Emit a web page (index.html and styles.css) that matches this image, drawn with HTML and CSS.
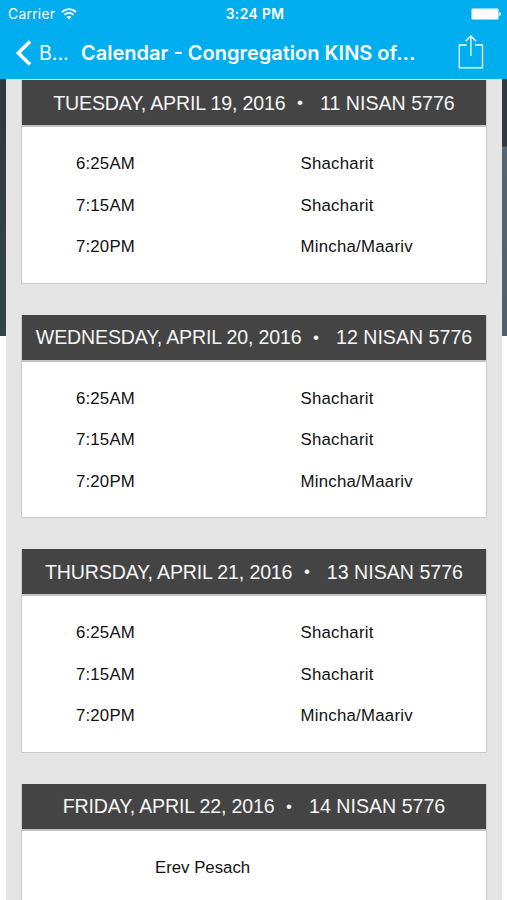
FILE: index.html
```html
<!DOCTYPE html>
<html lang="en">
<head>
<meta charset="utf-8">
<title>Calendar</title>
<link rel="stylesheet" href="styles.css">
</head>
<body>
<header class="topbar">
  <div class="status">
    <div class="carrier"><span>Carrier</span>
      <svg width="16" height="12" viewBox="0 0 16 12" fill="none" stroke="#fff" stroke-width="1.8"><path d="M1 4.2C5 .2 11 .2 15 4.2M3.5 6.8C6 4.3 10 4.3 12.5 6.8"/><path d="M5.6 8.9C7 7.6 9 7.6 10.4 8.9L8 11.3Z" fill="#fff" stroke="none"/></svg>
    </div>
    <div class="clock">3:24 PM</div>
    <svg class="battery" width="31" height="12" viewBox="0 0 31 12" fill="#fff"><rect x="0.5" y="0.5" width="27" height="11" rx="1"/><path d="M28.3 4c2.2.3 2.2 3.7 0 4z"/></svg>
  </div>
  <nav class="nav">
    <svg class="back" width="17" height="26" viewBox="0 0 17 26" fill="none" stroke="#fff" stroke-width="3.6"><path d="M15 1.4L3.4 13L15 24.6"/></svg>
    <span class="back-label">B...</span>
    <h1 class="title">Calendar - Congregation KINS of...</h1>
    <svg class="share" width="26" height="36" viewBox="0 0 26 36" fill="none" stroke="#fff" stroke-width="1.3"><path d="M8.5 11H1.3v22.8h23.2V11h-7.2M12.9 22V2M7.7 7.2L12.9 2l5.2 5.2"/></svg>
  </nav>
</header>
<main class="page">
  <div class="sheet">
    <section class="card">
      <h2 class="day"><span class="date">TUESDAY, APRIL 19, 2016</span><span class="dot">•</span><span>11 NISAN 5776</span></h2>
      <div class="times">
        <div class="row"><span>6:25AM</span><span class="service">Shacharit</span></div>
        <div class="row"><span>7:15AM</span><span class="service">Shacharit</span></div>
        <div class="row"><span>7:20PM</span><span class="service">Mincha/Maariv</span></div>
      </div>
    </section>
    <section class="card">
      <h2 class="day"><span class="date">WEDNESDAY, APRIL 20, 2016</span><span class="dot">•</span><span>12 NISAN 5776</span></h2>
      <div class="times">
        <div class="row"><span>6:25AM</span><span class="service">Shacharit</span></div>
        <div class="row"><span>7:15AM</span><span class="service">Shacharit</span></div>
        <div class="row"><span>7:20PM</span><span class="service">Mincha/Maariv</span></div>
      </div>
    </section>
    <section class="card">
      <h2 class="day"><span class="date">THURSDAY, APRIL 21, 2016</span><span class="dot">•</span><span>13 NISAN 5776</span></h2>
      <div class="times">
        <div class="row"><span>6:25AM</span><span class="service">Shacharit</span></div>
        <div class="row"><span>7:15AM</span><span class="service">Shacharit</span></div>
        <div class="row"><span>7:20PM</span><span class="service">Mincha/Maariv</span></div>
      </div>
    </section>
    <section class="card">
      <h2 class="day"><span class="date">FRIDAY, APRIL 22, 2016</span><span class="dot">•</span><span>14 NISAN 5776</span></h2>
      <div class="times">
        <div class="note">Erev Pesach</div>
      </div>
    </section>
  </div>
</main>
</body>
</html>
```
FILE: styles.css
```css
* { box-sizing: border-box; }
body {
  margin: 0;
  height: 900px;
  overflow: hidden;
  display: flex;
  flex-direction: column;
  background: #fff;
  font-family: "Liberation Sans", Arial, sans-serif;
}
.topbar {
  flex: none;
  height: 79px;
  background: #00aeef;
  color: #fff;
  font-family: Inter, sans-serif;
}
.status {
  height: 27px;
  display: grid;
  grid-template-columns: 1fr auto 1fr;
  align-items: center;
  padding: 0 5px 0 8px;
  font-size: 13.8px;
}
.carrier { display: flex; align-items: center; gap: 6px; letter-spacing: .3px; }
.clock { font-weight: 600; letter-spacing: .4px; }
.battery { justify-self: end; }
.nav {
  height: 52px;
  display: flex;
  align-items: center;
  padding: 0 23px 0 15px;
}
.back, .share { flex: none; }
.back-label { width: 42px; margin-left: 7px; font-size: 19.5px; white-space: nowrap; }
.title { flex: 1; margin: 0; font-size: 20px; font-weight: 600; white-space: nowrap; }
.share { margin-top: -3px; }
.page {
  flex: 1;
  min-height: 0;
  padding: 0 5px 0 6px;
  background:
    linear-gradient(#30393d, #35434a) 0 0 / 6px 257px no-repeat,
    linear-gradient(#30393d 0 67px, #526877 68px, #4b6070) 100% 0 / 5px 257px no-repeat,
    #fff;
}
.sheet {
  height: 821px;
  overflow: hidden;
  padding: 1px 15px 0;
  background: #e5e5e5;
}
.card {
  height: 203.5px;
  margin-bottom: 31px;
  border: 1px solid #cbcbcb;
  border-top: 0;
  background: #fff;
}
.day {
  height: 47px;
  margin: 0;
  padding-top: 1px;
  display: flex;
  justify-content: center;
  align-items: center;
  border-bottom: 2px solid #c4c4c4;
  background: #444;
  color: #f5f5f5;
  font-size: 19.6px;
  font-weight: 400;
  white-space: nowrap;
}
.date { letter-spacing: -.16px; }
.dot { width: 7px; margin: 0 16.5px 0 11px; font-size: 17px; text-align: center; }
.times { padding: 16.5px 0 0 54px; color: #111; font-size: 16.8px; letter-spacing: .18px; }
.row {
  height: 41.6px;
  display: grid;
  grid-template-columns: 224.5px 1fr;
  align-items: center;
}
.service { letter-spacing: .25px; }
.note { height: 41.6px; line-height: 41.6px; padding-left: 79px; letter-spacing: 0; }
```
